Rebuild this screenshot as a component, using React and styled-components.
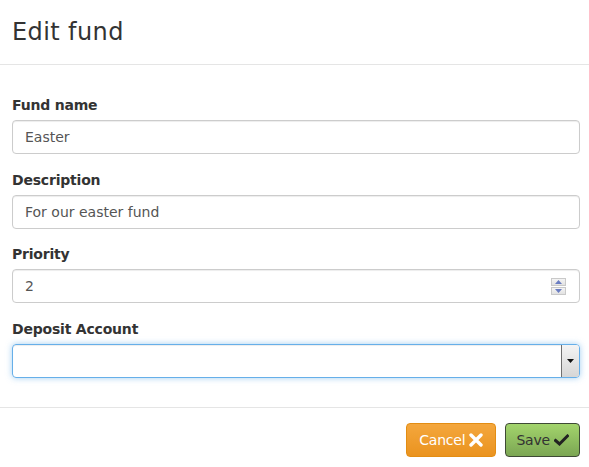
import React from 'react';
import styled, { createGlobalStyle } from 'styled-components';

const GlobalStyle = createGlobalStyle`
  html, body {
    margin: 0;
    padding: 0;
    background: #fff;
  }
  body {
    font-family: "DejaVu Sans", "Open Sans", sans-serif;
    color: #333;
  }
`;

const Modal = styled.div`
  width: 589px;
  height: 467px;
  background: #fff;
  display: flex;
  flex-direction: column;
`;

const Header = styled.div`
  height: 64px;
  border-bottom: 1px solid #e5e5e5;
  padding: 0 12px;
  display: flex;
  align-items: center;
`;

const Title = styled.h4`
  margin: 0;
  font-size: 24px;
  font-weight: 400;
  color: #333;
  letter-spacing: 0.4px;
`;

const Body = styled.div`
  padding: 30px 9px 29px 12px;
  display: flex;
  flex-direction: column;
`;

const Group = styled.div`
  display: flex;
  flex-direction: column;
  margin-bottom: 15.67px;
  &:last-child {
    margin-bottom: 0;
  }
`;

const Label = styled.label`
  font-size: 14px;
  font-weight: 700;
  color: #333;
  line-height: 20px;
  margin-bottom: 5px;
  letter-spacing: -0.2px;
`;

const Field = styled.div`
  position: relative;
  height: 34px;
  box-sizing: border-box;
  border: 1px solid ${p => (p.$focus ? '#66afe9' : '#ccc')};
  border-radius: 4px;
  box-shadow: ${p =>
    p.$focus
      ? 'inset 0 1px 1px rgba(0,0,0,.075), 0 0 6px rgba(102,175,233,.6)'
      : 'inset 0 1px 1px rgba(0,0,0,.075)'};
  padding: 0 12px;
  display: flex;
  align-items: center;
  font-size: 14px;
  color: #555;
`;

const Spinner = styled.div`
  position: absolute;
  right: 13px;
  top: 8px;
  width: 15px;
  height: 17px;
  display: flex;
  flex-direction: column;
  gap: 1px;
`;

const SpinHalf = styled.div`
  flex: 1;
  background: linear-gradient(#f4f4f4, #e2e2e2);
  border: 1px solid #c9c9c9;
  display: flex;
  align-items: center;
  justify-content: center;
`;

const SelectArrow = styled.div`
  position: absolute;
  right: 0;
  top: 0;
  bottom: 0;
  width: 17px;
  border-left: 1px solid #6f6f6f;
  background: linear-gradient(#f4f4f4, #d6d6d6);
  border-radius: 0 3px 3px 0;
  display: flex;
  align-items: center;
  justify-content: center;
`;

const Footer = styled.div`
  border-top: 1px solid #e5e5e5;
  padding: 15px 9px 0 12px;
  display: flex;
  justify-content: flex-end;
  gap: 9px;
`;

const Button = styled.button`
  height: 34px;
  box-sizing: border-box;
  padding: 0 ${p => (p.$variant === 'save' ? '10px' : '12px')};
  border-radius: 4px;
  font-family: inherit;
  font-size: 14px;
  letter-spacing: -0.2px;
  display: flex;
  align-items: center;
  gap: 4px;
  border: 1px solid ${p => (p.$variant === 'save' ? '#3e4a35' : '#e38d13')};
  color: ${p => (p.$variant === 'save' ? '#333' : '#fff')};
  background: ${p =>
    p.$variant === 'save'
      ? 'linear-gradient(#a3d46c, #7ba653)'
      : 'linear-gradient(#f4a73d, #ea931f)'};
`;

const Arrow = ({ up, color = '#6a7dc2' }) => (
  <svg width="7" height="4" viewBox="0 0 7 4">
    <path d={up ? 'M0 4 L3.5 0 L7 4 Z' : 'M0 0 L3.5 4 L7 0 Z'} fill={color} />
  </svg>
);

const CrossIcon = () => (
  <svg width="14" height="14" viewBox="0 0 14 14">
    <path d="M2 2 L12 12 M12 2 L2 12" stroke="#fff" strokeWidth="3.4" strokeLinecap="round" />
  </svg>
);

const CheckIcon = () => (
  <svg width="15" height="12" viewBox="0 0 15 12">
    <path d="M1.5 6.5 L5.5 10 L13.5 2" stroke="#222" strokeWidth="3" fill="none" strokeLinecap="square" />
  </svg>
);

export default function App() {
  return (
    <>
      <GlobalStyle />
      <Modal>
        <Header>
          <Title>Edit fund</Title>
        </Header>
        <Body>
          <Group>
            <Label>Fund name</Label>
            <Field>Easter</Field>
          </Group>
          <Group>
            <Label>Description</Label>
            <Field>For our easter fund</Field>
          </Group>
          <Group>
            <Label>Priority</Label>
            <Field>
              2
              <Spinner>
                <SpinHalf><Arrow up /></SpinHalf>
                <SpinHalf><Arrow /></SpinHalf>
              </Spinner>
            </Field>
          </Group>
          <Group>
            <Label>Deposit Account</Label>
            <Field $focus>
              <SelectArrow><Arrow color="#111" /></SelectArrow>
            </Field>
          </Group>
        </Body>
        <Footer>
          <Button>Cancel <CrossIcon /></Button>
          <Button $variant="save">Save <CheckIcon /></Button>
        </Footer>
      </Modal>
    </>
  );
}
